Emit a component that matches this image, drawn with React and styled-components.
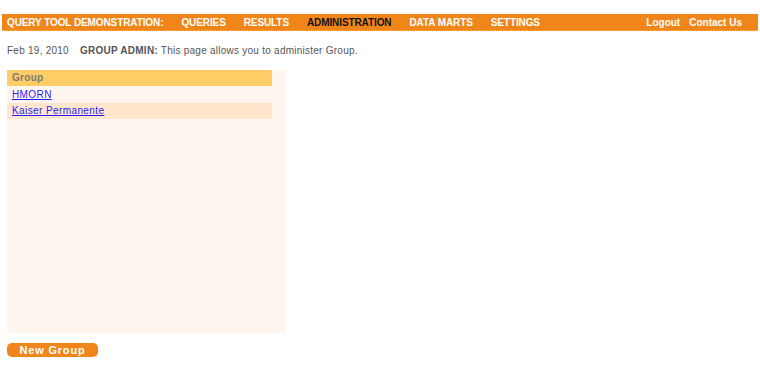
import React from "react";
import styled, { createGlobalStyle } from "styled-components";

const GlobalStyle = createGlobalStyle`
  body {
    margin: 0;
    background: #ffffff;
    font-family: "Liberation Sans", Arial, sans-serif;
  }
`;

const Page = styled.div`
  padding: 14px 2px 0 2px;
`;

const NavBar = styled.div`
  display: flex;
  align-items: center;
  height: 17px;
  background-color: #f0861a;
  border-bottom: 1px dotted #f6b57a;
  box-sizing: border-box;
  padding-left: 5px;
  padding-top: 1px;
`;

const Brand = styled.span`
  color: #ffffff;
  font-size: 10px;
  font-weight: bold;
  letter-spacing: -0.1px;
  margin-right: 18px;
`;

const NavItem = styled.a`
  color: ${(p) => (p.active ? "#111111" : "#ffffff")};
  font-size: 10px;
  font-weight: bold;
  letter-spacing: -0.1px;
  margin-right: 18px;
  text-decoration: none;
  cursor: pointer;
`;

const NavRight = styled.div`
  margin-left: auto;
  display: flex;
  gap: 9px;
  padding-right: 16px;
`;

const NavLink = styled.a`
  color: #ffffff;
  font-size: 10px;
  font-weight: bold;
  text-decoration: none;
`;

const Content = styled.div`
  padding: 0 5px;
`;

const InfoLine = styled.div`
  margin-top: 14px;
  font-size: 10px;
  letter-spacing: 0.25px;
  color: #555555;
  display: flex;
  gap: 11px;
  height: 12px;
  line-height: 12px;
`;

const Strong = styled.b`
  color: #555555;
`;

const Panel = styled.div`
  margin-top: 13px;
  width: 279px;
  height: 263px;
  background-color: #fff7ef;
`;

const Table = styled.div`
  width: 265px;
`;

const HeaderRow = styled.div`
  height: 16px;
  line-height: 16px;
  background-color: #ffcc66;
  color: #7a7a7a;
  font-size: 10px;
  font-weight: bold;
  letter-spacing: 0.3px;
  padding-left: 5px;
`;

const Row = styled.div`
  height: ${(p) => (p.first ? "17px" : "16px")};
  line-height: ${(p) => (p.first ? "17px" : "16px")};
  background-color: ${(p) => (p.alt ? "#ffe6cc" : "transparent")};
  padding-left: 5px;
  font-size: 10px;
  letter-spacing: 0.4px;
`;

const RowLink = styled.a`
  color: #2a1cff;
  text-decoration: underline;
  cursor: pointer;
`;

const Button = styled.button`
  display: block;
  margin-top: 10px;
  width: 91px;
  height: 14px;
  border: none;
  border-radius: 5px;
  background-color: #f0861a;
  color: #ffffff;
  font-family: "Liberation Sans", Arial, sans-serif;
  font-size: 11px;
  font-weight: bold;
  letter-spacing: 0.8px;
  padding: 0;
  line-height: 14px;
  cursor: pointer;
`;

export default function App() {
  return (
    <>
      <GlobalStyle />
      <Page>
        <NavBar>
          <Brand>QUERY TOOL DEMONSTRATION:</Brand>
          <NavItem>QUERIES</NavItem>
          <NavItem>RESULTS</NavItem>
          <NavItem active>ADMINISTRATION</NavItem>
          <NavItem>DATA MARTS</NavItem>
          <NavItem>SETTINGS</NavItem>
          <NavRight>
            <NavLink>Logout</NavLink>
            <NavLink>Contact Us</NavLink>
          </NavRight>
        </NavBar>
        <Content>
          <InfoLine>
            <span>Feb 19, 2010</span>
            <span>
              <Strong>GROUP ADMIN:</Strong> This page allows you to administer Group.
            </span>
          </InfoLine>
          <Panel>
            <Table>
              <HeaderRow>Group</HeaderRow>
              <Row first>
                <RowLink>HMORN</RowLink>
              </Row>
              <Row alt>
                <RowLink>Kaiser Permanente</RowLink>
              </Row>
            </Table>
          </Panel>
          <Button>New Group</Button>
        </Content>
      </Page>
    </>
  );
}
